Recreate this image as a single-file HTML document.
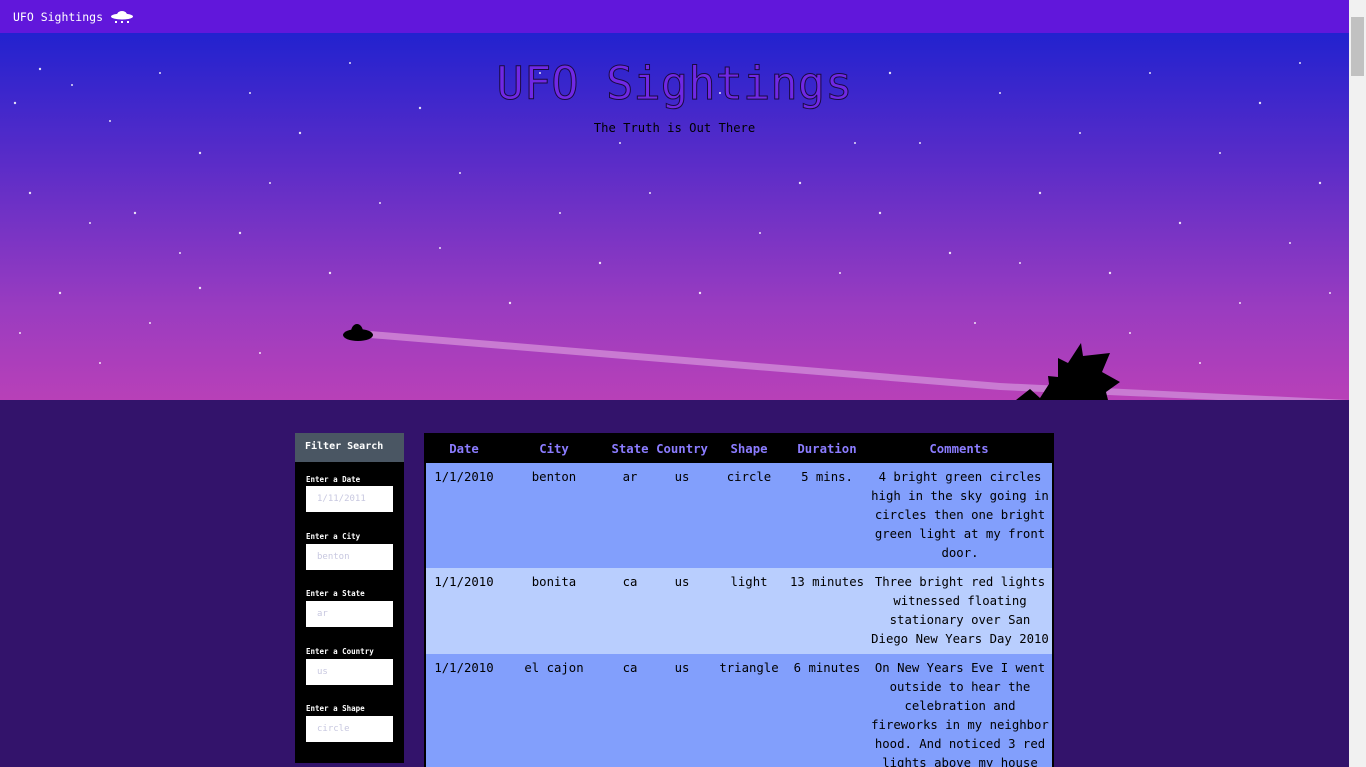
<!DOCTYPE html>
<html><head><meta charset="utf-8"><style>
*{margin:0;padding:0;box-sizing:border-box}
html,body{width:1366px;height:767px;overflow:hidden;background:#33136b;font-family:"DejaVu Sans Mono","Liberation Mono",monospace}
.nav{position:absolute;left:0;top:0;width:1349px;height:33px;background:#6117db;color:#fff;font-size:11.5px}
.nav span{position:absolute;left:13px;top:10px}
.hero{position:absolute;left:0;top:33px;width:1349px;height:367px;background:linear-gradient(#2222cf 0%,#5a2cc8 35%,#9a3cc0 75%,#b840b8 100%);overflow:hidden}
h1{position:absolute;left:0;width:1349px;top:24px;text-align:center;font-size:45.5px;font-weight:normal;color:#7028e4;-webkit-text-stroke:1px #1a0a40}
.sub{position:absolute;left:0;width:1349px;top:88px;text-align:center;font-size:12.2px;color:#000}
.sb{position:absolute;left:1349px;top:0;width:17px;height:767px;background:#f1f1f1}
.sb div{position:absolute;left:2px;top:17px;width:13px;height:59px;background:#c1c1c1}
.filter{position:absolute;left:295px;top:433px;width:109px;height:330px;background:#000}
.fh{height:29px;background:#4a5663;color:#fff;font-size:10px;font-weight:bold;padding:8px 0 0 10px}
.lab{position:absolute;left:11px;font-size:7.5px;font-weight:bold;color:#fff}
.inp{position:absolute;left:11px;width:87px;height:26px;background:#fff;color:#c8c8e0;font-size:9px;padding:8px 0 0 11px}
.tbl{position:absolute;left:424px;top:433px;width:630px;height:334px;background:#000;padding:0 2px;overflow:hidden}
table{border-collapse:collapse;width:626px;font-size:12.3px;color:#000;table-layout:fixed}
th{height:30px;color:#8b7cff;font-size:12.3px;font-weight:bold;text-align:center;background:#000;padding-top:2px}
td{vertical-align:top;text-align:center;line-height:19px;padding:5px 0 5px}
td:last-child{padding-left:5px;padding-right:3px}
tr.a td{background:#829ffc}
tr.b td{background:#b9cefe}
</style></head><body>
<div class="nav"><span>UFO Sightings</span>
<svg style="position:absolute;left:110px;top:9px" width="24" height="16" viewBox="0 0 24 16"><path d="M7 6a5 4 0 0 1 10 0z" fill="#fff"/><ellipse cx="12" cy="7.5" rx="11" ry="3" fill="#fff"/><rect x="5" y="12" width="2" height="2" fill="#fff"/><rect x="11" y="12" width="2" height="2" fill="#fff"/><rect x="17" y="12" width="2" height="2" fill="#fff"/></svg></div>
<div class="hero">
<svg width="1349" height="367" style="position:absolute;left:0;top:0">
<g fill="#fff" opacity="0.85">
<circle cx="40" cy="36" r="1.2"/><circle cx="72" cy="52" r="1"/><circle cx="15" cy="70" r="1.2"/><circle cx="110" cy="88" r="1"/><circle cx="160" cy="40" r="1"/><circle cx="200" cy="120" r="1.2"/><circle cx="250" cy="60" r="1"/><circle cx="300" cy="100" r="1.2"/><circle cx="350" cy="30" r="1"/><circle cx="420" cy="75" r="1.2"/><circle cx="460" cy="140" r="1"/><circle cx="30" cy="160" r="1.2"/><circle cx="90" cy="190" r="1"/><circle cx="135" cy="180" r="1.2"/><circle cx="180" cy="220" r="1"/><circle cx="240" cy="200" r="1.2"/><circle cx="270" cy="150" r="1"/><circle cx="330" cy="240" r="1.2"/><circle cx="380" cy="170" r="1"/><circle cx="60" cy="260" r="1.2"/><circle cx="20" cy="300" r="1"/><circle cx="150" cy="290" r="1"/><circle cx="200" cy="255" r="1.2"/><circle cx="440" cy="215" r="1"/><circle cx="510" cy="270" r="1.2"/><circle cx="560" cy="180" r="1"/><circle cx="600" cy="230" r="1.2"/><circle cx="650" cy="160" r="1"/><circle cx="700" cy="260" r="1.2"/><circle cx="760" cy="200" r="1"/><circle cx="800" cy="150" r="1.2"/><circle cx="840" cy="240" r="1"/><circle cx="880" cy="180" r="1.2"/><circle cx="920" cy="110" r="1"/><circle cx="950" cy="220" r="1.2"/><circle cx="1000" cy="60" r="1"/><circle cx="1040" cy="160" r="1.2"/><circle cx="1080" cy="100" r="1"/><circle cx="1110" cy="240" r="1.2"/><circle cx="1150" cy="40" r="1"/><circle cx="1180" cy="190" r="1.2"/><circle cx="1220" cy="120" r="1"/><circle cx="1260" cy="70" r="1.2"/><circle cx="1290" cy="210" r="1"/><circle cx="1320" cy="150" r="1.2"/><circle cx="1240" cy="270" r="1"/><circle cx="1300" cy="30" r="1"/><circle cx="975" cy="290" r="1"/><circle cx="890" cy="40" r="1.2"/><circle cx="855" cy="110" r="1"/><circle cx="540" cy="40" r="1"/><circle cx="620" cy="110" r="1"/><circle cx="720" cy="60" r="1"/><circle cx="1020" cy="230" r="1"/><circle cx="1130" cy="300" r="1"/><circle cx="1200" cy="330" r="1"/><circle cx="1330" cy="260" r="1"/><circle cx="100" cy="330" r="1"/><circle cx="260" cy="320" r="1"/>
</g>
<polygon points="370,298 1000,350 1349,367 1349,373 1000,357 370,305" fill="#c97bd2"/>
<ellipse cx="358" cy="302" rx="15" ry="6" fill="#000"/><path d="M351 299a6 8 0 0 1 12 0z" fill="#000"/>
<polygon points="1016,367 1030,356 1040,365 1049,351 1048,343 1058,344 1058,325 1068,330 1081,310 1083,323 1110,320 1102,339 1120,349 1106,359 1108,367" fill="#000"/>
</svg>
<h1>UFO Sightings</h1>
<div class="sub">The Truth is Out There</div>
</div>
<div class="filter"><div class="fh">Filter Search</div>
<div class="lab" style="top:42px">Enter a Date</div><div class="inp" style="top:53px">1/11/2011</div>
<div class="lab" style="top:99px">Enter a City</div><div class="inp" style="top:111px">benton</div>
<div class="lab" style="top:156px">Enter a State</div><div class="inp" style="top:168px">ar</div>
<div class="lab" style="top:214px">Enter a Country</div><div class="inp" style="top:226px">us</div>
<div class="lab" style="top:271px">Enter a Shape</div><div class="inp" style="top:283px">circle</div>
</div>
<div class="tbl"><table>
<colgroup><col style="width:76px"><col style="width:104px"><col style="width:48px"><col style="width:56px"><col style="width:78px"><col style="width:78px"><col style="width:186px"></colgroup>
<tr><th>Date</th><th>City</th><th>State</th><th>Country</th><th>Shape</th><th>Duration</th><th>Comments</th></tr>
<tr class="a"><td>1/1/2010</td><td>benton</td><td>ar</td><td>us</td><td>circle</td><td>5 mins.</td><td>4 bright green circles high in the sky going in circles then one bright green light at my front door.</td></tr>
<tr class="b"><td>1/1/2010</td><td>bonita</td><td>ca</td><td>us</td><td>light</td><td style="white-space:nowrap">13 minutes</td><td>Three bright red lights witnessed floating stationary over San Diego New Years Day 2010</td></tr>
<tr class="a"><td>1/1/2010</td><td>el cajon</td><td>ca</td><td>us</td><td>triangle</td><td>6 minutes</td><td>On New Years Eve I went outside to hear the celebration and fireworks in my neighbor hood. And noticed 3 red lights above my house</td></tr>
</table></div>
<div class="sb"><div></div></div>
</body></html>
